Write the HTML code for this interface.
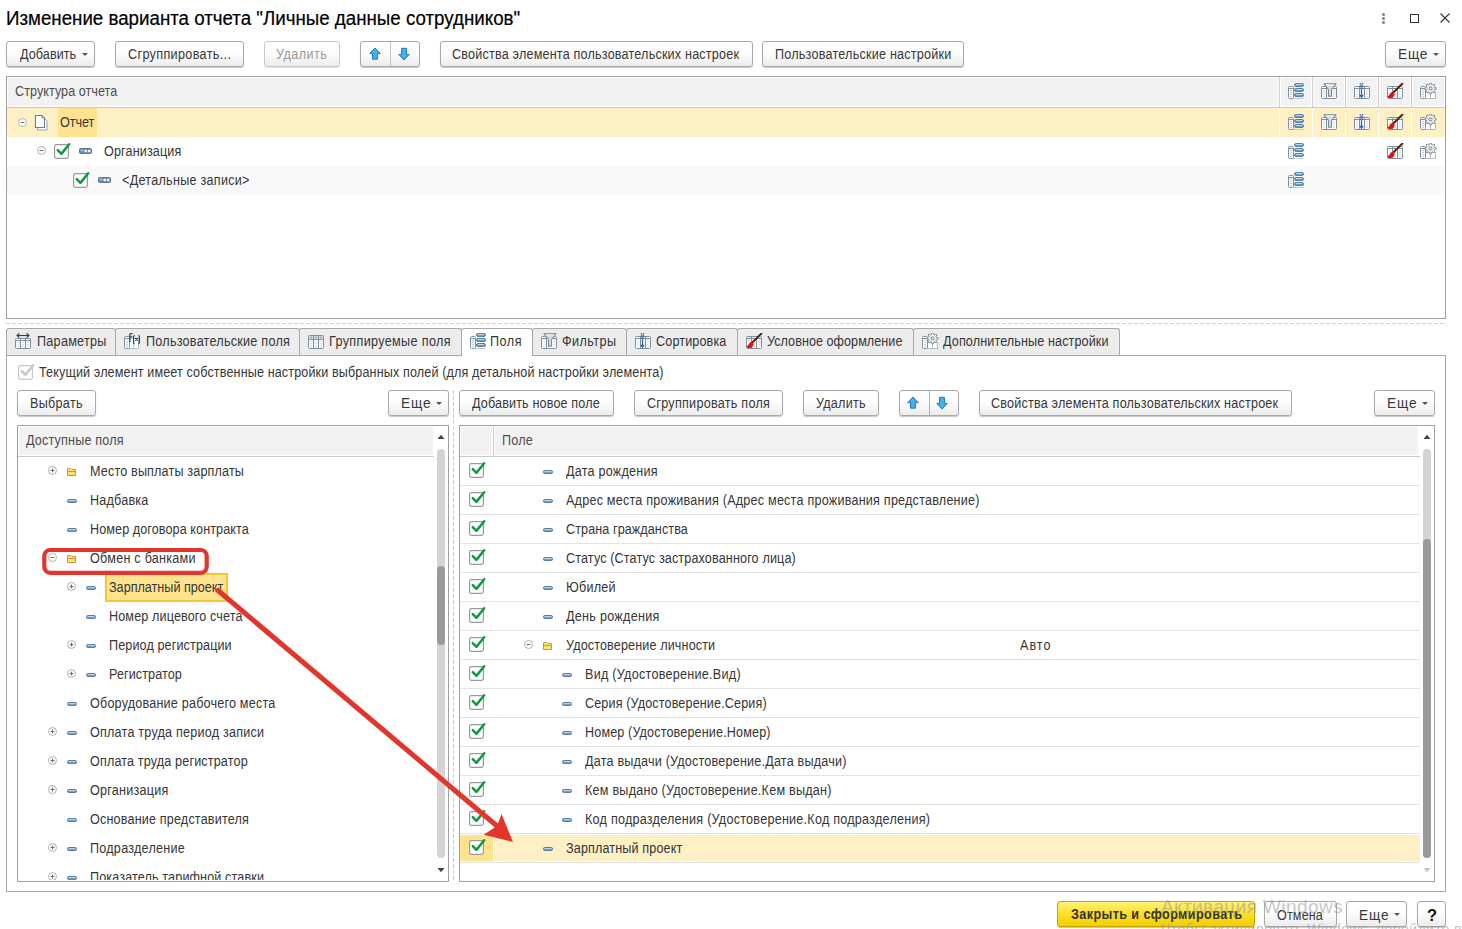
<!DOCTYPE html><html><head><meta charset="utf-8"><style>
*{box-sizing:content-box}
html,body{margin:0;padding:0}
body{width:1462px;height:929px;position:relative;overflow:hidden;background:#fff;font-family:"Liberation Sans",sans-serif;}
.t{position:absolute;white-space:nowrap}
.btn{position:absolute;border:1px solid #a9a9a9;border-radius:3px;background:linear-gradient(#ffffff 0%,#fdfdfd 45%,#ececec 100%)}
.dd{position:absolute;width:0;height:0;border-left:3.5px solid transparent;border-right:3.5px solid transparent;border-top:3.5px solid #555}
</style></head><body>
<div class="t" style="left:6.0px;top:8.59px;font-size:19.5px;line-height:19.5px;color:#000;font-weight:normal;letter-spacing:0px;transform:scaleX(0.96);transform-origin:0 0;-webkit-text-stroke:0.2px #000">Изменение варианта отчета "Личные данные сотрудников"</div>
<div style="position:absolute;left:1382px;top:13.0px;width:3px;height:3px;border-radius:50%;background:#808080"></div>
<div style="position:absolute;left:1382px;top:17.0px;width:3px;height:3px;border-radius:50%;background:#808080"></div>
<div style="position:absolute;left:1382px;top:21.0px;width:3px;height:3px;border-radius:50%;background:#808080"></div>
<div style="position:absolute;left:1410px;top:14px;width:7px;height:7px;border:1.3px solid #333"></div>
<svg style="position:absolute;left:1440px;top:13px;" width="10" height="10" viewBox="0 0 10 10"><path d="M0.5 0.5L9.5 9.5M9.5 0.5L0.5 9.5" stroke="#333" stroke-width="1.1"/></svg>
<div class="btn" style="left:6px;top:41px;width:87px;height:24px;border-color:#a9a9a9;box-shadow:0 1px 1px rgba(0,0,0,0.22)"></div>
<div class="t" style="left:19.7px;top:47.15px;font-size:14px;line-height:14px;color:#383838;font-weight:normal;letter-spacing:0.07380952380952813px;transform:scaleX(0.9);transform-origin:0 0;">Добавить</div>
<div class="dd" style="left:82px;top:53px"></div>
<div class="btn" style="left:115px;top:41px;width:127px;height:24px;border-color:#a9a9a9;box-shadow:0 1px 1px rgba(0,0,0,0.22)"></div>
<div class="t" style="left:127.5px;top:47.15px;font-size:14px;line-height:14px;color:#383838;font-weight:normal;letter-spacing:0.3899999999999939px;transform:scaleX(0.9);transform-origin:0 0;">Сгруппировать...</div>
<div class="btn" style="left:264px;top:41px;width:74px;height:24px;border-color:#c8c8c8;box-shadow:0 1px 0 rgba(0,0,0,0.10)"></div>
<div class="t" style="left:276.1px;top:47.15px;font-size:14px;line-height:14px;color:#999;font-weight:normal;letter-spacing:0.5055555555555858px;transform:scaleX(0.9);transform-origin:0 0;">Удалить</div>
<div class="btn" style="left:360px;top:41px;width:58px;height:24px;border-color:#a9a9a9;box-shadow:0 1px 1px rgba(0,0,0,0.22)"></div>
<div style="position:absolute;left:390px;top:42px;width:1px;height:24px;background:#c4c4c4"></div>
<div class="btn" style="left:440px;top:41px;width:311px;height:24px;border-color:#a9a9a9;box-shadow:0 1px 1px rgba(0,0,0,0.22)"></div>
<div class="t" style="left:452.4px;top:47.15px;font-size:14px;line-height:14px;color:#383838;font-weight:normal;letter-spacing:0.21349206349206348px;transform:scaleX(0.9);transform-origin:0 0;">Свойства элемента пользовательских настроек</div>
<div class="btn" style="left:762px;top:41px;width:200px;height:24px;border-color:#a9a9a9;box-shadow:0 1px 1px rgba(0,0,0,0.22)"></div>
<div class="t" style="left:774.7px;top:47.15px;font-size:14px;line-height:14px;color:#383838;font-weight:normal;letter-spacing:0.2459999999999854px;transform:scaleX(0.9);transform-origin:0 0;">Пользовательские настройки</div>
<div class="btn" style="left:1385px;top:41px;width:59px;height:24px;border-color:#a9a9a9;box-shadow:0 1px 1px rgba(0,0,0,0.22)"></div>
<div class="t" style="left:1398.4px;top:47.15px;font-size:14px;line-height:14px;color:#383838;font-weight:normal;letter-spacing:0.7833333333332879px;transform:scaleX(0.98);transform-origin:0 0;">Еще</div>
<div class="dd" style="left:1433px;top:53px"></div>
<div style="position:absolute;left:6px;top:76px;width:1438px;height:241px;border:1px solid #a0a0a0;background:#fff"></div>
<div style="position:absolute;left:8px;top:78px;width:1270px;height:28px;background:#f2f2f2"></div>
<div style="position:absolute;left:7px;top:107px;width:1438px;height:1px;background:#c9c9c9"></div>
<div class="t" style="left:14.8px;top:83.75px;font-size:14px;line-height:14px;color:#4d4d4d;font-weight:normal;letter-spacing:0.05222222222222023px;transform:scaleX(0.9);transform-origin:0 0;">Структура отчета</div>
<div style="position:absolute;left:7px;top:108px;width:1438px;height:29px;background:#fdf0c5"></div>
<div style="position:absolute;left:58px;top:108px;width:39px;height:29px;background:#fde391"></div>
<div style="position:absolute;left:7px;top:166px;width:1438px;height:29px;background:#f9f9f9"></div>
<div class="t" style="left:59.8px;top:114.85px;font-size:14px;line-height:14px;color:#363636;font-weight:normal;letter-spacing:-0.08333333333332954px;transform:scaleX(0.9);transform-origin:0 0;">Отчет</div>
<div class="t" style="left:103.8px;top:143.85px;font-size:14px;line-height:14px;color:#363636;font-weight:normal;letter-spacing:0.15px;transform:scaleX(0.9);transform-origin:0 0;">Организация</div>
<div class="t" style="left:122.4px;top:172.85px;font-size:14px;line-height:14px;color:#363636;font-weight:normal;letter-spacing:0.29901960784313547px;transform:scaleX(0.9);transform-origin:0 0;">&lt;Детальные записи&gt;</div>
<svg style="position:absolute;left:18px;top:118px;" width="9" height="9" viewBox="0 0 9 9"><circle cx="4.5" cy="4.5" r="4" fill="#fff" stroke="#b0b0b0" stroke-width="1"/><path d="M2.5 4.5H6.5" stroke="#6e6e6e" stroke-width="1"/></svg>
<svg style="position:absolute;left:37px;top:146px;" width="9" height="9" viewBox="0 0 9 9"><circle cx="4.5" cy="4.5" r="4" fill="#fff" stroke="#b0b0b0" stroke-width="1"/><path d="M2.5 4.5H6.5" stroke="#6e6e6e" stroke-width="1"/></svg>
<svg style="position:absolute;left:54px;top:141px;" width="17" height="18" viewBox="0 0 17 18"><rect x="0.6" y="3.6" width="13.8" height="13.8" rx="1.8" fill="#fff" stroke="#9a9a9a" stroke-width="1.2"/><path d="M3.8 9.2L7.4 12.9L15.2 3.2" fill="none" stroke="#0e9a40" stroke-width="2.5" stroke-linecap="round" stroke-linejoin="round"/></svg>
<svg style="position:absolute;left:73px;top:170px;" width="17" height="18" viewBox="0 0 17 18"><rect x="0.6" y="3.6" width="13.8" height="13.8" rx="1.8" fill="#fff" stroke="#9a9a9a" stroke-width="1.2"/><path d="M3.8 9.2L7.4 12.9L15.2 3.2" fill="none" stroke="#0e9a40" stroke-width="2.5" stroke-linecap="round" stroke-linejoin="round"/></svg>
<svg style="position:absolute;left:369px;top:47px;" width="12" height="14" viewBox="0 0 12 14"><path d="M6 1L11.2 6.6H8.4V12.2H3.6V6.6H0.8z" fill="#45b0ea" stroke="#2277b8" stroke-width="1" stroke-linejoin="miter"/></svg>
<svg style="position:absolute;left:397.5px;top:47px;" width="12" height="14" viewBox="0 0 12 14"><path d="M6 13L11.2 7.4H8.4V1.3H3.6V7.4H0.8z" fill="#45b0ea" stroke="#2277b8" stroke-width="1" stroke-linejoin="miter"/></svg>
<div style="position:absolute;left:1279px;top:77px;width:1px;height:30px;background:#cdcdcd"></div>
<div style="position:absolute;left:1281px;top:78px;width:30px;height:28px;background:#f2f2f2"></div>
<div style="position:absolute;left:1279px;top:108px;width:1px;height:29px;background:#ffffff"></div>
<div style="position:absolute;left:1312px;top:77px;width:1px;height:30px;background:#cdcdcd"></div>
<div style="position:absolute;left:1314px;top:78px;width:30px;height:28px;background:#f2f2f2"></div>
<div style="position:absolute;left:1312px;top:108px;width:1px;height:29px;background:#ffffff"></div>
<div style="position:absolute;left:1345px;top:77px;width:1px;height:30px;background:#cdcdcd"></div>
<div style="position:absolute;left:1347px;top:78px;width:30px;height:28px;background:#f2f2f2"></div>
<div style="position:absolute;left:1345px;top:108px;width:1px;height:29px;background:#ffffff"></div>
<div style="position:absolute;left:1378px;top:77px;width:1px;height:30px;background:#cdcdcd"></div>
<div style="position:absolute;left:1380px;top:78px;width:30px;height:28px;background:#f2f2f2"></div>
<div style="position:absolute;left:1378px;top:108px;width:1px;height:29px;background:#ffffff"></div>
<div style="position:absolute;left:1411px;top:77px;width:1px;height:30px;background:#cdcdcd"></div>
<div style="position:absolute;left:1413px;top:78px;width:31px;height:28px;background:#f2f2f2"></div>
<div style="position:absolute;left:1411px;top:108px;width:1px;height:29px;background:#ffffff"></div>
<svg style="position:absolute;left:1288px;top:83px;" width="17" height="16" viewBox="0 0 17 16"><path d="M5.5 15.5H15.5" stroke="#c2cbd3"/><rect x="0.5" y="3.5" width="5" height="12" rx="1" fill="#fff" stroke="#7f8f9d"/><path d="M0.5 5.5H5.5" stroke="#7f8f9d"/><path d="M3 7V15" stroke="#8e9ca8" stroke-dasharray="1 1"/><rect x="6.5" y="0.5" width="9" height="3" rx="1.5" fill="#6f9bc3" stroke="#5683ab" stroke-width="1"/><path d="M7.8 1.5H14.2" stroke="#c0d5e8" stroke-width="1"/><rect x="6.5" y="5.5" width="9" height="3" rx="1.5" fill="#6f9bc3" stroke="#5683ab" stroke-width="1"/><path d="M7.8 6.5H14.2" stroke="#c0d5e8" stroke-width="1"/><rect x="6.5" y="10.5" width="9" height="3" rx="1.5" fill="#6f9bc3" stroke="#5683ab" stroke-width="1"/><path d="M7.8 11.5H14.2" stroke="#c0d5e8" stroke-width="1"/></svg>
<svg style="position:absolute;left:1288px;top:114px;" width="17" height="16" viewBox="0 0 17 16"><path d="M5.5 15.5H15.5" stroke="#c2cbd3"/><rect x="0.5" y="3.5" width="5" height="12" rx="1" fill="#fff" stroke="#7f8f9d"/><path d="M0.5 5.5H5.5" stroke="#7f8f9d"/><path d="M3 7V15" stroke="#8e9ca8" stroke-dasharray="1 1"/><rect x="6.5" y="0.5" width="9" height="3" rx="1.5" fill="#6f9bc3" stroke="#5683ab" stroke-width="1"/><path d="M7.8 1.5H14.2" stroke="#c0d5e8" stroke-width="1"/><rect x="6.5" y="5.5" width="9" height="3" rx="1.5" fill="#6f9bc3" stroke="#5683ab" stroke-width="1"/><path d="M7.8 6.5H14.2" stroke="#c0d5e8" stroke-width="1"/><rect x="6.5" y="10.5" width="9" height="3" rx="1.5" fill="#6f9bc3" stroke="#5683ab" stroke-width="1"/><path d="M7.8 11.5H14.2" stroke="#c0d5e8" stroke-width="1"/></svg>
<svg style="position:absolute;left:1321px;top:83px;" width="17" height="16" viewBox="0 0 17 16"><rect x="0.5" y="3.5" width="15" height="12" rx="1" fill="#fff" stroke="#7f8f9d" stroke-width="1"/><path d="M0.5 5.5H15.5M5.5 4V15" stroke="#7f8f9d" stroke-width="1"/><path d="M3 7V15M8 7V15M13 7V15" stroke="#b3bec8" stroke-width="1" stroke-dasharray="1 1"/><path d="M2.8 0.8H15.2L10.6 6.2V13.2H7.4V6.2z" fill="#d7dde3" stroke="#6c7d8c" stroke-width="1" stroke-linejoin="round"/><path d="M5 1.8H13" stroke="#fff" stroke-width="0.8"/></svg>
<svg style="position:absolute;left:1321px;top:114px;" width="17" height="16" viewBox="0 0 17 16"><rect x="0.5" y="3.5" width="15" height="12" rx="1" fill="#fff" stroke="#7f8f9d" stroke-width="1"/><path d="M0.5 5.5H15.5M5.5 4V15" stroke="#7f8f9d" stroke-width="1"/><path d="M3 7V15M8 7V15M13 7V15" stroke="#b3bec8" stroke-width="1" stroke-dasharray="1 1"/><path d="M2.8 0.8H15.2L10.6 6.2V13.2H7.4V6.2z" fill="#d7dde3" stroke="#6c7d8c" stroke-width="1" stroke-linejoin="round"/><path d="M5 1.8H13" stroke="#fff" stroke-width="0.8"/></svg>
<svg style="position:absolute;left:1354px;top:83px;" width="17" height="16" viewBox="0 0 17 16"><rect x="0.5" y="3.5" width="15" height="12" rx="1" fill="#fff" stroke="#7f8f9d" stroke-width="1"/><path d="M0.5 5.5H15.5M5.5 4V15M10.5 4V15" stroke="#7f8f9d" stroke-width="1"/><path d="M3 7V15M8 7V15M13 7V15" stroke="#b3bec8" stroke-width="1" stroke-dasharray="1 1"/><rect x="6" y="6" width="4" height="9" fill="#fff"/><path d="M7.5 7V12.5" stroke="#2d64a8" stroke-width="1.3"/><path d="M5.2 11.8H9.8L7.5 15.4z" fill="#2d64a8"/><circle cx="6.3" cy="0.8" r="0.75" fill="#2d64a8"/><circle cx="8.7" cy="0.8" r="0.75" fill="#2d64a8"/><circle cx="7.5" cy="1.9" r="0.75" fill="#2d64a8"/><circle cx="6.3" cy="3" r="0.75" fill="#2d64a8"/><circle cx="8.7" cy="3" r="0.75" fill="#2d64a8"/><circle cx="7.5" cy="4.1" r="0.75" fill="#2d64a8"/><circle cx="6.3" cy="5.2" r="0.75" fill="#2d64a8"/><circle cx="8.7" cy="5.2" r="0.75" fill="#2d64a8"/><circle cx="7.5" cy="6.3" r="0.75" fill="#2d64a8"/></svg>
<svg style="position:absolute;left:1354px;top:114px;" width="17" height="16" viewBox="0 0 17 16"><rect x="0.5" y="3.5" width="15" height="12" rx="1" fill="#fff" stroke="#7f8f9d" stroke-width="1"/><path d="M0.5 5.5H15.5M5.5 4V15M10.5 4V15" stroke="#7f8f9d" stroke-width="1"/><path d="M3 7V15M8 7V15M13 7V15" stroke="#b3bec8" stroke-width="1" stroke-dasharray="1 1"/><rect x="6" y="6" width="4" height="9" fill="#fff"/><path d="M7.5 7V12.5" stroke="#2d64a8" stroke-width="1.3"/><path d="M5.2 11.8H9.8L7.5 15.4z" fill="#2d64a8"/><circle cx="6.3" cy="0.8" r="0.75" fill="#2d64a8"/><circle cx="8.7" cy="0.8" r="0.75" fill="#2d64a8"/><circle cx="7.5" cy="1.9" r="0.75" fill="#2d64a8"/><circle cx="6.3" cy="3" r="0.75" fill="#2d64a8"/><circle cx="8.7" cy="3" r="0.75" fill="#2d64a8"/><circle cx="7.5" cy="4.1" r="0.75" fill="#2d64a8"/><circle cx="6.3" cy="5.2" r="0.75" fill="#2d64a8"/><circle cx="8.7" cy="5.2" r="0.75" fill="#2d64a8"/><circle cx="7.5" cy="6.3" r="0.75" fill="#2d64a8"/></svg>
<svg style="position:absolute;left:1387px;top:83px;" width="17" height="16" viewBox="0 0 17 16"><rect x="0.5" y="3.5" width="15" height="12" rx="1" fill="#fff" stroke="#7f8f9d" stroke-width="1"/><path d="M0.5 5.5H15.5M5.5 4V15M10.5 4V15" stroke="#7f8f9d" stroke-width="1"/><path d="M3 7V15M8 7V15M13 7V15" stroke="#b3bec8" stroke-width="1" stroke-dasharray="1 1"/><path d="M15.4 0.6L6.8 9" stroke="#4b2608" stroke-width="2" stroke-linecap="round"/><path d="M7 8.8C4.6 8.6 3.4 9.9 2.8 11.3C2.4 12.3 1.5 12.9 0.2 13.7C1.3 15.5 4.8 15.5 6.2 14C7.4 12.8 8 10.8 7 8.8z" fill="#ee0a0a"/></svg>
<svg style="position:absolute;left:1387px;top:114px;" width="17" height="16" viewBox="0 0 17 16"><rect x="0.5" y="3.5" width="15" height="12" rx="1" fill="#fff" stroke="#7f8f9d" stroke-width="1"/><path d="M0.5 5.5H15.5M5.5 4V15M10.5 4V15" stroke="#7f8f9d" stroke-width="1"/><path d="M3 7V15M8 7V15M13 7V15" stroke="#b3bec8" stroke-width="1" stroke-dasharray="1 1"/><path d="M15.4 0.6L6.8 9" stroke="#4b2608" stroke-width="2" stroke-linecap="round"/><path d="M7 8.8C4.6 8.6 3.4 9.9 2.8 11.3C2.4 12.3 1.5 12.9 0.2 13.7C1.3 15.5 4.8 15.5 6.2 14C7.4 12.8 8 10.8 7 8.8z" fill="#ee0a0a"/></svg>
<svg style="position:absolute;left:1420px;top:83px;" width="17" height="16" viewBox="0 0 17 16"><rect x="5.5" y="9.5" width="10" height="6" fill="#fff" stroke="#b0bbc5"/><path d="M10.5 9.5V15.5" stroke="#b0bbc5"/><rect x="0.5" y="3.5" width="5" height="12" rx="1" fill="#fff" stroke="#7f8f9d"/><path d="M0.5 5.5H5.5" stroke="#7f8f9d"/><path d="M3 7V15" stroke="#8e9ca8" stroke-dasharray="1 1"/><g transform="translate(10.5 5.4)"><path d="M3.98 -0.97 L5.55 -0.73 L5.55 0.73 L3.98 0.97 L3.51 2.13 L4.44 3.41 L3.41 4.44 L2.13 3.51 L0.97 3.98 L0.73 5.55 L-0.73 5.55 L-0.97 3.98 L-2.13 3.51 L-3.41 4.44 L-4.44 3.41 L-3.51 2.13 L-3.98 0.97 L-5.55 0.73 L-5.55 -0.73 L-3.98 -0.97 L-3.51 -2.13 L-4.44 -3.41 L-3.41 -4.44 L-2.13 -3.51 L-0.97 -3.98 L-0.73 -5.55 L0.73 -5.55 L0.97 -3.98 L2.13 -3.51 L3.41 -4.44 L4.44 -3.41 L3.51 -2.13Z" fill="#eef0f2" stroke="#7b858e" stroke-width="0.9" stroke-linejoin="round"/><circle r="1.5" fill="#fff" stroke="#6b747c" stroke-width="1"/></g></svg>
<svg style="position:absolute;left:1420px;top:114px;" width="17" height="16" viewBox="0 0 17 16"><rect x="5.5" y="9.5" width="10" height="6" fill="#fff" stroke="#b0bbc5"/><path d="M10.5 9.5V15.5" stroke="#b0bbc5"/><rect x="0.5" y="3.5" width="5" height="12" rx="1" fill="#fff" stroke="#7f8f9d"/><path d="M0.5 5.5H5.5" stroke="#7f8f9d"/><path d="M3 7V15" stroke="#8e9ca8" stroke-dasharray="1 1"/><g transform="translate(10.5 5.4)"><path d="M3.98 -0.97 L5.55 -0.73 L5.55 0.73 L3.98 0.97 L3.51 2.13 L4.44 3.41 L3.41 4.44 L2.13 3.51 L0.97 3.98 L0.73 5.55 L-0.73 5.55 L-0.97 3.98 L-2.13 3.51 L-3.41 4.44 L-4.44 3.41 L-3.51 2.13 L-3.98 0.97 L-5.55 0.73 L-5.55 -0.73 L-3.98 -0.97 L-3.51 -2.13 L-4.44 -3.41 L-3.41 -4.44 L-2.13 -3.51 L-0.97 -3.98 L-0.73 -5.55 L0.73 -5.55 L0.97 -3.98 L2.13 -3.51 L3.41 -4.44 L4.44 -3.41 L3.51 -2.13Z" fill="#eef0f2" stroke="#7b858e" stroke-width="0.9" stroke-linejoin="round"/><circle r="1.5" fill="#fff" stroke="#6b747c" stroke-width="1"/></g></svg>
<svg style="position:absolute;left:1288px;top:143px;" width="17" height="16" viewBox="0 0 17 16"><path d="M5.5 15.5H15.5" stroke="#c2cbd3"/><rect x="0.5" y="3.5" width="5" height="12" rx="1" fill="#fff" stroke="#7f8f9d"/><path d="M0.5 5.5H5.5" stroke="#7f8f9d"/><path d="M3 7V15" stroke="#8e9ca8" stroke-dasharray="1 1"/><rect x="6.5" y="0.5" width="9" height="3" rx="1.5" fill="#6f9bc3" stroke="#5683ab" stroke-width="1"/><path d="M7.8 1.5H14.2" stroke="#c0d5e8" stroke-width="1"/><rect x="6.5" y="5.5" width="9" height="3" rx="1.5" fill="#6f9bc3" stroke="#5683ab" stroke-width="1"/><path d="M7.8 6.5H14.2" stroke="#c0d5e8" stroke-width="1"/><rect x="6.5" y="10.5" width="9" height="3" rx="1.5" fill="#6f9bc3" stroke="#5683ab" stroke-width="1"/><path d="M7.8 11.5H14.2" stroke="#c0d5e8" stroke-width="1"/></svg>
<svg style="position:absolute;left:1387px;top:143px;" width="17" height="16" viewBox="0 0 17 16"><rect x="0.5" y="3.5" width="15" height="12" rx="1" fill="#fff" stroke="#7f8f9d" stroke-width="1"/><path d="M0.5 5.5H15.5M5.5 4V15M10.5 4V15" stroke="#7f8f9d" stroke-width="1"/><path d="M3 7V15M8 7V15M13 7V15" stroke="#b3bec8" stroke-width="1" stroke-dasharray="1 1"/><path d="M15.4 0.6L6.8 9" stroke="#4b2608" stroke-width="2" stroke-linecap="round"/><path d="M7 8.8C4.6 8.6 3.4 9.9 2.8 11.3C2.4 12.3 1.5 12.9 0.2 13.7C1.3 15.5 4.8 15.5 6.2 14C7.4 12.8 8 10.8 7 8.8z" fill="#ee0a0a"/></svg>
<svg style="position:absolute;left:1420px;top:143px;" width="17" height="16" viewBox="0 0 17 16"><rect x="5.5" y="9.5" width="10" height="6" fill="#fff" stroke="#b0bbc5"/><path d="M10.5 9.5V15.5" stroke="#b0bbc5"/><rect x="0.5" y="3.5" width="5" height="12" rx="1" fill="#fff" stroke="#7f8f9d"/><path d="M0.5 5.5H5.5" stroke="#7f8f9d"/><path d="M3 7V15" stroke="#8e9ca8" stroke-dasharray="1 1"/><g transform="translate(10.5 5.4)"><path d="M3.98 -0.97 L5.55 -0.73 L5.55 0.73 L3.98 0.97 L3.51 2.13 L4.44 3.41 L3.41 4.44 L2.13 3.51 L0.97 3.98 L0.73 5.55 L-0.73 5.55 L-0.97 3.98 L-2.13 3.51 L-3.41 4.44 L-4.44 3.41 L-3.51 2.13 L-3.98 0.97 L-5.55 0.73 L-5.55 -0.73 L-3.98 -0.97 L-3.51 -2.13 L-4.44 -3.41 L-3.41 -4.44 L-2.13 -3.51 L-0.97 -3.98 L-0.73 -5.55 L0.73 -5.55 L0.97 -3.98 L2.13 -3.51 L3.41 -4.44 L4.44 -3.41 L3.51 -2.13Z" fill="#eef0f2" stroke="#7b858e" stroke-width="0.9" stroke-linejoin="round"/><circle r="1.5" fill="#fff" stroke="#6b747c" stroke-width="1"/></g></svg>
<svg style="position:absolute;left:1288px;top:172px;" width="17" height="16" viewBox="0 0 17 16"><path d="M5.5 15.5H15.5" stroke="#c2cbd3"/><rect x="0.5" y="3.5" width="5" height="12" rx="1" fill="#fff" stroke="#7f8f9d"/><path d="M0.5 5.5H5.5" stroke="#7f8f9d"/><path d="M3 7V15" stroke="#8e9ca8" stroke-dasharray="1 1"/><rect x="6.5" y="0.5" width="9" height="3" rx="1.5" fill="#6f9bc3" stroke="#5683ab" stroke-width="1"/><path d="M7.8 1.5H14.2" stroke="#c0d5e8" stroke-width="1"/><rect x="6.5" y="5.5" width="9" height="3" rx="1.5" fill="#6f9bc3" stroke="#5683ab" stroke-width="1"/><path d="M7.8 6.5H14.2" stroke="#c0d5e8" stroke-width="1"/><rect x="6.5" y="10.5" width="9" height="3" rx="1.5" fill="#6f9bc3" stroke="#5683ab" stroke-width="1"/><path d="M7.8 11.5H14.2" stroke="#c0d5e8" stroke-width="1"/></svg>
<svg style="position:absolute;left:34px;top:114px;" width="15" height="17" viewBox="0 0 15 17"><path d="M3.5 4.5h7l2.5 2.5v9h-9.5z" fill="#fff" stroke="#9ea5ab" stroke-width="1"/><path d="M1.5 1.5h6.5l2.5 2.5v9.5h-9z" fill="#fff" stroke="#6a7f93" stroke-width="1.1"/><path d="M8 1.5v2.5h2.5" fill="#dfe5ea" stroke="#6a7f93" stroke-width="0.9"/></svg>
<svg style="position:absolute;left:79px;top:148px;" width="13" height="6" viewBox="0 0 13 6"><rect x="0.5" y="0.5" width="12" height="5" rx="1" fill="#6c89a6" stroke="#5a7896" stroke-width="1"/><rect x="1.6" y="1.6" width="3" height="1.6" fill="#b9c9d8"/><rect x="5.6" y="1.8" width="2.4" height="2.4" fill="#f4f7fa"/><rect x="9" y="1.8" width="2.4" height="2.4" fill="#f4f7fa"/></svg>
<svg style="position:absolute;left:98px;top:177px;" width="13" height="6" viewBox="0 0 13 6"><rect x="0.5" y="0.5" width="12" height="5" rx="1" fill="#6c89a6" stroke="#5a7896" stroke-width="1"/><rect x="1.6" y="1.6" width="3" height="1.6" fill="#b9c9d8"/><rect x="5.6" y="1.8" width="2.4" height="2.4" fill="#f4f7fa"/><rect x="9" y="1.8" width="2.4" height="2.4" fill="#f4f7fa"/></svg>
<div style="position:absolute;left:6px;top:323px;width:1440px;height:1px;background:repeating-linear-gradient(90deg,#d2d2d2 0 4px,transparent 4px 6px)"></div>
<div style="position:absolute;left:6px;top:355px;width:1438px;height:535px;border:1px solid #a8a8a8;background:#fff"></div>
<div style="position:absolute;left:6px;top:328px;width:108px;height:26px;border:1px solid #a8a8a8;border-bottom:none;border-radius:3px 3px 0 0;background:#ececec"></div>
<svg style="position:absolute;left:15px;top:333px;" width="17" height="16" viewBox="0 0 17 16"><rect x="0.5" y="5.5" width="15" height="10" rx="1" fill="#fff" stroke="#7f8f9d"/><path d="M0.5 7.5H15.5M5.5 6V15M10.5 6V15" stroke="#7f8f9d"/><path d="M3 9V15M8 9V15M13 9V15" stroke="#b3bec8" stroke-dasharray="1 1"/><path d="M2.2 2.5H13.8" stroke="#2e3f50" stroke-width="1.1"/><path d="M4.4 0.3L2 2.5L4.4 4.7M11.6 0.3L14 2.5L11.6 4.7" fill="none" stroke="#2e3f50" stroke-width="1.1"/></svg>
<div class="t" style="left:36.8px;top:334.25px;font-size:14px;line-height:14px;color:#363636;font-weight:normal;letter-spacing:0.29999999999999616px;transform:scaleX(0.9);transform-origin:0 0;">Параметры</div>
<div style="position:absolute;left:115px;top:328px;width:183px;height:26px;border:1px solid #a8a8a8;border-bottom:none;border-radius:3px 3px 0 0;background:#ececec"></div>
<svg style="position:absolute;left:124px;top:333px;" width="17" height="16" viewBox="0 0 17 16"><rect x="4.5" y="5.5" width="10" height="10" fill="#fff" stroke="#b8c2ca"/><path d="M9.5 6V15.5" stroke="#b8c2ca"/><rect x="0.5" y="3.5" width="5" height="12" rx="1" fill="#fff" stroke="#7f8f9d"/><path d="M0.5 5.5H5.5" stroke="#7f8f9d"/><path d="M3 7V15" stroke="#8e9ca8" stroke-dasharray="1 1"/><path d="M5.8 9.2V1.6Q5.8 0.7 6.8 0.7H8.6M5.8 3.9H8.4" fill="none" stroke="#1f4a6e" stroke-width="1.3"/><path d="M10.6 2.4Q9.6 2.6 9.6 4V9.4Q9.6 10.6 10.6 10.8M14.4 2.4Q15.4 2.6 15.4 4V9.4Q15.4 10.6 14.4 10.8" fill="none" stroke="#1f4a6e" stroke-width="1.2"/><path d="M11.2 5L13.8 7.6M13.8 5L11.2 7.6" stroke="#1f4a6e" stroke-width="1.1"/></svg>
<div class="t" style="left:145.5px;top:334.25px;font-size:14px;line-height:14px;color:#363636;font-weight:normal;letter-spacing:0.2766666666666576px;transform:scaleX(0.9);transform-origin:0 0;">Пользовательские поля</div>
<div style="position:absolute;left:299px;top:328px;width:161px;height:26px;border:1px solid #a8a8a8;border-bottom:none;border-radius:3px 3px 0 0;background:#ececec"></div>
<svg style="position:absolute;left:308px;top:333px;" width="17" height="16" viewBox="0 0 17 16"><rect x="0.5" y="2.5" width="15" height="13" rx="1" fill="#fff" stroke="#7f8f9d"/><path d="M0.5 6.5H15.5M5.5 3V15M10.5 3V15" stroke="#7f8f9d"/><path d="M1.5 3.5H4.5V5.5H1.5zM6.5 3.5H9.5V5.5H6.5zM11.5 3.5H14.5V5.5H11.5z" fill="#93a5b5"/><path d="M3 8V15M8 8V15M13 8V15" stroke="#b3bec8" stroke-dasharray="1 1"/></svg>
<div class="t" style="left:329.3px;top:334.25px;font-size:14px;line-height:14px;color:#363636;font-weight:normal;letter-spacing:0.3833333333333294px;transform:scaleX(0.9);transform-origin:0 0;">Группируемые поля</div>
<div style="position:absolute;left:461px;top:328px;width:70px;height:27px;border:1px solid #a8a8a8;border-bottom:none;border-radius:3px 3px 0 0;background:#fff"></div>
<svg style="position:absolute;left:470px;top:333px;" width="17" height="16" viewBox="0 0 17 16"><path d="M5.5 15.5H15.5" stroke="#c2cbd3"/><rect x="0.5" y="3.5" width="5" height="12" rx="1" fill="#fff" stroke="#7f8f9d"/><path d="M0.5 5.5H5.5" stroke="#7f8f9d"/><path d="M3 7V15" stroke="#8e9ca8" stroke-dasharray="1 1"/><rect x="6.5" y="0.5" width="9" height="3" rx="1.5" fill="#6f9bc3" stroke="#5683ab" stroke-width="1"/><path d="M7.8 1.5H14.2" stroke="#c0d5e8" stroke-width="1"/><rect x="6.5" y="5.5" width="9" height="3" rx="1.5" fill="#6f9bc3" stroke="#5683ab" stroke-width="1"/><path d="M7.8 6.5H14.2" stroke="#c0d5e8" stroke-width="1"/><rect x="6.5" y="10.5" width="9" height="3" rx="1.5" fill="#6f9bc3" stroke="#5683ab" stroke-width="1"/><path d="M7.8 11.5H14.2" stroke="#c0d5e8" stroke-width="1"/></svg>
<div class="t" style="left:490.3px;top:334.25px;font-size:14px;line-height:14px;color:#363636;font-weight:normal;letter-spacing:0.5944444444443431px;transform:scaleX(0.9);transform-origin:0 0;">Поля</div>
<div style="position:absolute;left:532px;top:328px;width:93px;height:26px;border:1px solid #a8a8a8;border-bottom:none;border-radius:3px 3px 0 0;background:#ececec"></div>
<svg style="position:absolute;left:541px;top:333px;" width="17" height="16" viewBox="0 0 17 16"><rect x="0.5" y="3.5" width="15" height="12" rx="1" fill="#fff" stroke="#7f8f9d" stroke-width="1"/><path d="M0.5 5.5H15.5M5.5 4V15" stroke="#7f8f9d" stroke-width="1"/><path d="M3 7V15M8 7V15M13 7V15" stroke="#b3bec8" stroke-width="1" stroke-dasharray="1 1"/><path d="M2.8 0.8H15.2L10.6 6.2V13.2H7.4V6.2z" fill="#d7dde3" stroke="#6c7d8c" stroke-width="1" stroke-linejoin="round"/><path d="M5 1.8H13" stroke="#fff" stroke-width="0.8"/></svg>
<div class="t" style="left:562.4px;top:334.25px;font-size:14px;line-height:14px;color:#363636;font-weight:normal;letter-spacing:0.4833333333333333px;transform:scaleX(0.9);transform-origin:0 0;">Фильтры</div>
<div style="position:absolute;left:626px;top:328px;width:110px;height:26px;border:1px solid #a8a8a8;border-bottom:none;border-radius:3px 3px 0 0;background:#ececec"></div>
<svg style="position:absolute;left:635px;top:333px;" width="17" height="16" viewBox="0 0 17 16"><rect x="0.5" y="3.5" width="15" height="12" rx="1" fill="#fff" stroke="#7f8f9d" stroke-width="1"/><path d="M0.5 5.5H15.5M5.5 4V15M10.5 4V15" stroke="#7f8f9d" stroke-width="1"/><path d="M3 7V15M8 7V15M13 7V15" stroke="#b3bec8" stroke-width="1" stroke-dasharray="1 1"/><rect x="6" y="6" width="4" height="9" fill="#fff"/><path d="M7.5 7V12.5" stroke="#2d64a8" stroke-width="1.3"/><path d="M5.2 11.8H9.8L7.5 15.4z" fill="#2d64a8"/><circle cx="6.3" cy="0.8" r="0.75" fill="#2d64a8"/><circle cx="8.7" cy="0.8" r="0.75" fill="#2d64a8"/><circle cx="7.5" cy="1.9" r="0.75" fill="#2d64a8"/><circle cx="6.3" cy="3" r="0.75" fill="#2d64a8"/><circle cx="8.7" cy="3" r="0.75" fill="#2d64a8"/><circle cx="7.5" cy="4.1" r="0.75" fill="#2d64a8"/><circle cx="6.3" cy="5.2" r="0.75" fill="#2d64a8"/><circle cx="8.7" cy="5.2" r="0.75" fill="#2d64a8"/><circle cx="7.5" cy="6.3" r="0.75" fill="#2d64a8"/></svg>
<div class="t" style="left:656.4px;top:334.25px;font-size:14px;line-height:14px;color:#363636;font-weight:normal;letter-spacing:0.15px;transform:scaleX(0.9);transform-origin:0 0;">Сортировка</div>
<div style="position:absolute;left:737px;top:328px;width:175px;height:26px;border:1px solid #a8a8a8;border-bottom:none;border-radius:3px 3px 0 0;background:#ececec"></div>
<svg style="position:absolute;left:746px;top:333px;" width="17" height="16" viewBox="0 0 17 16"><rect x="0.5" y="3.5" width="15" height="12" rx="1" fill="#fff" stroke="#7f8f9d" stroke-width="1"/><path d="M0.5 5.5H15.5M5.5 4V15M10.5 4V15" stroke="#7f8f9d" stroke-width="1"/><path d="M3 7V15M8 7V15M13 7V15" stroke="#b3bec8" stroke-width="1" stroke-dasharray="1 1"/><path d="M15.4 0.6L6.8 9" stroke="#4b2608" stroke-width="2" stroke-linecap="round"/><path d="M7 8.8C4.6 8.6 3.4 9.9 2.8 11.3C2.4 12.3 1.5 12.9 0.2 13.7C1.3 15.5 4.8 15.5 6.2 14C7.4 12.8 8 10.8 7 8.8z" fill="#ee0a0a"/></svg>
<div class="t" style="left:767.3px;top:334.25px;font-size:14px;line-height:14px;color:#363636;font-weight:normal;letter-spacing:0.053703703703690195px;transform:scaleX(0.9);transform-origin:0 0;">Условное оформление</div>
<div style="position:absolute;left:913px;top:328px;width:205px;height:26px;border:1px solid #a8a8a8;border-bottom:none;border-radius:3px 3px 0 0;background:#ececec"></div>
<svg style="position:absolute;left:922px;top:333px;" width="17" height="16" viewBox="0 0 17 16"><rect x="5.5" y="9.5" width="10" height="6" fill="#fff" stroke="#b0bbc5"/><path d="M10.5 9.5V15.5" stroke="#b0bbc5"/><rect x="0.5" y="3.5" width="5" height="12" rx="1" fill="#fff" stroke="#7f8f9d"/><path d="M0.5 5.5H5.5" stroke="#7f8f9d"/><path d="M3 7V15" stroke="#8e9ca8" stroke-dasharray="1 1"/><g transform="translate(10.5 5.4)"><path d="M3.98 -0.97 L5.55 -0.73 L5.55 0.73 L3.98 0.97 L3.51 2.13 L4.44 3.41 L3.41 4.44 L2.13 3.51 L0.97 3.98 L0.73 5.55 L-0.73 5.55 L-0.97 3.98 L-2.13 3.51 L-3.41 4.44 L-4.44 3.41 L-3.51 2.13 L-3.98 0.97 L-5.55 0.73 L-5.55 -0.73 L-3.98 -0.97 L-3.51 -2.13 L-4.44 -3.41 L-3.41 -4.44 L-2.13 -3.51 L-0.97 -3.98 L-0.73 -5.55 L0.73 -5.55 L0.97 -3.98 L2.13 -3.51 L3.41 -4.44 L4.44 -3.41 L3.51 -2.13Z" fill="#eef0f2" stroke="#7b858e" stroke-width="0.9" stroke-linejoin="round"/><circle r="1.5" fill="#fff" stroke="#6b747c" stroke-width="1"/></g></svg>
<div class="t" style="left:943.4px;top:334.25px;font-size:14px;line-height:14px;color:#363636;font-weight:normal;letter-spacing:0.12681159420289329px;transform:scaleX(0.9);transform-origin:0 0;">Дополнительные настройки</div>
<svg style="position:absolute;left:18px;top:362px;" width="17" height="18" viewBox="0 0 17 18"><rect x="0.6" y="3.6" width="13.8" height="13.8" rx="1.8" fill="#fff" stroke="#c8c8c8" stroke-width="1.2"/><path d="M3.8 9.2L7.4 12.9L15.2 3.2" fill="none" stroke="#c8c8c8" stroke-width="2.5" stroke-linecap="round" stroke-linejoin="round"/></svg>
<div class="t" style="left:38.5px;top:365.05px;font-size:14px;line-height:14px;color:#363636;font-weight:normal;letter-spacing:0.13566308243727598px;transform:scaleX(0.9);transform-origin:0 0;">Текущий элемент имеет собственные настройки выбранных полей (для детальной настройки элемента)</div>
<div class="btn" style="left:17px;top:390px;width:77px;height:24px;border-color:#a9a9a9;box-shadow:0 1px 1px rgba(0,0,0,0.22)"></div>
<div class="t" style="left:29.9px;top:396.45px;font-size:14px;line-height:14px;color:#383838;font-weight:normal;letter-spacing:0.3277777777777803px;transform:scaleX(0.9);transform-origin:0 0;">Выбрать</div>
<div class="btn" style="left:388px;top:390px;width:59px;height:24px;border-color:#a9a9a9;box-shadow:0 1px 1px rgba(0,0,0,0.22)"></div>
<div class="t" style="left:401.4px;top:396.45px;font-size:14px;line-height:14px;color:#383838;font-weight:normal;letter-spacing:0.8499999999999887px;transform:scaleX(0.98);transform-origin:0 0;">Еще</div>
<div class="dd" style="left:436px;top:402px"></div>
<div style="position:absolute;left:453px;top:390px;width:1px;height:490px;background:repeating-linear-gradient(180deg,#cdcdcd 0 4px,transparent 4px 6px)"></div>
<div style="position:absolute;left:17px;top:425px;width:430px;height:455px;border:1px solid #a0a0a0;background:#fff"></div>
<div style="position:absolute;left:19px;top:427px;width:414px;height:28px;background:#f2f2f2"></div>
<div style="position:absolute;left:18px;top:456px;width:416px;height:1px;background:#c9c9c9"></div>
<div class="t" style="left:25.5px;top:432.75px;font-size:14px;line-height:14px;color:#4d4d4d;font-weight:normal;letter-spacing:0.19102564102563868px;transform:scaleX(0.9);transform-origin:0 0;">Доступные поля</div>
<svg style="position:absolute;left:437px;top:434px;" width="8" height="6" viewBox="0 0 8 6"><path d="M0.5 5L4 0.8L7.5 5z" fill="#444"/></svg>
<div style="position:absolute;left:437px;top:449px;width:8px;height:409px;background:#d4d4d4;border-radius:4px"></div>
<div style="position:absolute;left:437px;top:566px;width:8px;height:79px;background:#9a9a9a;border-radius:4px"></div>
<svg style="position:absolute;left:437px;top:867px;" width="8" height="6" viewBox="0 0 8 6"><path d="M0.5 1L4 5.2L7.5 1z" fill="#444"/></svg>
<div style="position:absolute;left:18px;top:457px;width:416px;height:423px;overflow:hidden">
<svg style="position:absolute;left:30px;top:9px;" width="9" height="9" viewBox="0 0 9 9"><circle cx="4.5" cy="4.5" r="4" fill="#fff" stroke="#b0b0b0" stroke-width="1"/><path d="M2.5 4.5H6.5M4.5 2.5V6.5" stroke="#6e6e6e" stroke-width="1"/></svg>
<svg style="position:absolute;left:49px;top:11px;" width="9" height="8" viewBox="0 0 9 8"><path d="M0.5 7.5V0.8Q0.5 0.5 0.8 0.5H3.8L4.8 1.5H8.2Q8.5 1.5 8.5 1.8V7.5z" fill="#fde46a" stroke="#cf973c" stroke-width="1"/><path d="M1 3.5H8" stroke="#cf973c" stroke-width="1"/></svg>
<div class="t" style="left:71.5px;top:6.95px;font-size:14px;line-height:14px;color:#363636;font-weight:normal;letter-spacing:0.17539682539682397px;transform:scaleX(0.9);transform-origin:0 0;">Место выплаты зарплаты</div>
<svg style="position:absolute;left:49px;top:42px;" width="10" height="4" viewBox="0 0 10 4"><rect x="0.5" y="0.5" width="9" height="3" rx="1.3" fill="#79a0c4" stroke="#5780a5" stroke-width="1"/><path d="M1.5 1.5H8.5" stroke="#bcd1e5" stroke-width="1"/></svg>
<div class="t" style="left:71.5px;top:35.95px;font-size:14px;line-height:14px;color:#363636;font-weight:normal;letter-spacing:0.22619047619047183px;transform:scaleX(0.9);transform-origin:0 0;">Надбавка</div>
<svg style="position:absolute;left:49px;top:71px;" width="10" height="4" viewBox="0 0 10 4"><rect x="0.5" y="0.5" width="9" height="3" rx="1.3" fill="#79a0c4" stroke="#5780a5" stroke-width="1"/><path d="M1.5 1.5H8.5" stroke="#bcd1e5" stroke-width="1"/></svg>
<div class="t" style="left:71.5px;top:64.95px;font-size:14px;line-height:14px;color:#363636;font-weight:normal;letter-spacing:0.09782608695652305px;transform:scaleX(0.9);transform-origin:0 0;">Номер договора контракта</div>
<svg style="position:absolute;left:30px;top:96px;" width="9" height="9" viewBox="0 0 9 9"><circle cx="4.5" cy="4.5" r="4" fill="#fff" stroke="#b0b0b0" stroke-width="1"/><path d="M2.5 4.5H6.5" stroke="#6e6e6e" stroke-width="1"/></svg>
<svg style="position:absolute;left:49px;top:98px;" width="9" height="8" viewBox="0 0 9 8"><path d="M0.5 7.5V0.8Q0.5 0.5 0.8 0.5H3.8L4.8 1.5H8.2Q8.5 1.5 8.5 1.8V7.5z" fill="#fde46a" stroke="#cf973c" stroke-width="1"/><path d="M1 3.5H8" stroke="#cf973c" stroke-width="1"/></svg>
<div class="t" style="left:71.5px;top:93.95px;font-size:14px;line-height:14px;color:#363636;font-weight:normal;letter-spacing:0.2738095238095195px;transform:scaleX(0.9);transform-origin:0 0;">Обмен с банками</div>
<div style="position:absolute;left:87px;top:116px;width:119px;height:25px;border:2px solid #f6c630;background:#fde38e"></div>
<svg style="position:absolute;left:49px;top:125px;" width="9" height="9" viewBox="0 0 9 9"><circle cx="4.5" cy="4.5" r="4" fill="#fff" stroke="#b0b0b0" stroke-width="1"/><path d="M2.5 4.5H6.5M4.5 2.5V6.5" stroke="#6e6e6e" stroke-width="1"/></svg>
<svg style="position:absolute;left:68px;top:129px;" width="10" height="4" viewBox="0 0 10 4"><rect x="0.5" y="0.5" width="9" height="3" rx="1.3" fill="#79a0c4" stroke="#5780a5" stroke-width="1"/><path d="M1.5 1.5H8.5" stroke="#bcd1e5" stroke-width="1"/></svg>
<div class="t" style="left:90.5px;top:122.95px;font-size:14px;line-height:14px;color:#363636;font-weight:normal;letter-spacing:0.008333333333329557px;transform:scaleX(0.9);transform-origin:0 0;">Зарплатный проект</div>
<svg style="position:absolute;left:68px;top:158px;" width="10" height="4" viewBox="0 0 10 4"><rect x="0.5" y="0.5" width="9" height="3" rx="1.3" fill="#79a0c4" stroke="#5780a5" stroke-width="1"/><path d="M1.5 1.5H8.5" stroke="#bcd1e5" stroke-width="1"/></svg>
<div class="t" style="left:90.5px;top:151.95px;font-size:14px;line-height:14px;color:#363636;font-weight:normal;letter-spacing:0.14298245614034927px;transform:scaleX(0.9);transform-origin:0 0;">Номер лицевого счета</div>
<svg style="position:absolute;left:49px;top:183px;" width="9" height="9" viewBox="0 0 9 9"><circle cx="4.5" cy="4.5" r="4" fill="#fff" stroke="#b0b0b0" stroke-width="1"/><path d="M2.5 4.5H6.5M4.5 2.5V6.5" stroke="#6e6e6e" stroke-width="1"/></svg>
<svg style="position:absolute;left:68px;top:187px;" width="10" height="4" viewBox="0 0 10 4"><rect x="0.5" y="0.5" width="9" height="3" rx="1.3" fill="#79a0c4" stroke="#5780a5" stroke-width="1"/><path d="M1.5 1.5H8.5" stroke="#bcd1e5" stroke-width="1"/></svg>
<div class="t" style="left:90.5px;top:180.95px;font-size:14px;line-height:14px;color:#363636;font-weight:normal;letter-spacing:0.1264705882352977px;transform:scaleX(0.9);transform-origin:0 0;">Период регистрации</div>
<svg style="position:absolute;left:49px;top:212px;" width="9" height="9" viewBox="0 0 9 9"><circle cx="4.5" cy="4.5" r="4" fill="#fff" stroke="#b0b0b0" stroke-width="1"/><path d="M2.5 4.5H6.5M4.5 2.5V6.5" stroke="#6e6e6e" stroke-width="1"/></svg>
<svg style="position:absolute;left:68px;top:216px;" width="10" height="4" viewBox="0 0 10 4"><rect x="0.5" y="0.5" width="9" height="3" rx="1.3" fill="#79a0c4" stroke="#5780a5" stroke-width="1"/><path d="M1.5 1.5H8.5" stroke="#bcd1e5" stroke-width="1"/></svg>
<div class="t" style="left:90.5px;top:209.95px;font-size:14px;line-height:14px;color:#363636;font-weight:normal;letter-spacing:0.0966666666666697px;transform:scaleX(0.9);transform-origin:0 0;">Регистратор</div>
<svg style="position:absolute;left:49px;top:245px;" width="10" height="4" viewBox="0 0 10 4"><rect x="0.5" y="0.5" width="9" height="3" rx="1.3" fill="#79a0c4" stroke="#5780a5" stroke-width="1"/><path d="M1.5 1.5H8.5" stroke="#bcd1e5" stroke-width="1"/></svg>
<div class="t" style="left:71.5px;top:238.95px;font-size:14px;line-height:14px;color:#363636;font-weight:normal;letter-spacing:0.21666666666666431px;transform:scaleX(0.9);transform-origin:0 0;">Оборудование рабочего места</div>
<svg style="position:absolute;left:30px;top:270px;" width="9" height="9" viewBox="0 0 9 9"><circle cx="4.5" cy="4.5" r="4" fill="#fff" stroke="#b0b0b0" stroke-width="1"/><path d="M2.5 4.5H6.5M4.5 2.5V6.5" stroke="#6e6e6e" stroke-width="1"/></svg>
<svg style="position:absolute;left:49px;top:274px;" width="10" height="4" viewBox="0 0 10 4"><rect x="0.5" y="0.5" width="9" height="3" rx="1.3" fill="#79a0c4" stroke="#5780a5" stroke-width="1"/><path d="M1.5 1.5H8.5" stroke="#bcd1e5" stroke-width="1"/></svg>
<div class="t" style="left:71.5px;top:267.95px;font-size:14px;line-height:14px;color:#363636;font-weight:normal;letter-spacing:0.23533333333332845px;transform:scaleX(0.9);transform-origin:0 0;">Оплата труда период записи</div>
<svg style="position:absolute;left:30px;top:299px;" width="9" height="9" viewBox="0 0 9 9"><circle cx="4.5" cy="4.5" r="4" fill="#fff" stroke="#b0b0b0" stroke-width="1"/><path d="M2.5 4.5H6.5M4.5 2.5V6.5" stroke="#6e6e6e" stroke-width="1"/></svg>
<svg style="position:absolute;left:49px;top:303px;" width="10" height="4" viewBox="0 0 10 4"><rect x="0.5" y="0.5" width="9" height="3" rx="1.3" fill="#79a0c4" stroke="#5780a5" stroke-width="1"/><path d="M1.5 1.5H8.5" stroke="#bcd1e5" stroke-width="1"/></svg>
<div class="t" style="left:71.5px;top:296.95px;font-size:14px;line-height:14px;color:#363636;font-weight:normal;letter-spacing:0.16159420289855336px;transform:scaleX(0.9);transform-origin:0 0;">Оплата труда регистратор</div>
<svg style="position:absolute;left:30px;top:328px;" width="9" height="9" viewBox="0 0 9 9"><circle cx="4.5" cy="4.5" r="4" fill="#fff" stroke="#b0b0b0" stroke-width="1"/><path d="M2.5 4.5H6.5M4.5 2.5V6.5" stroke="#6e6e6e" stroke-width="1"/></svg>
<svg style="position:absolute;left:49px;top:332px;" width="10" height="4" viewBox="0 0 10 4"><rect x="0.5" y="0.5" width="9" height="3" rx="1.3" fill="#79a0c4" stroke="#5780a5" stroke-width="1"/><path d="M1.5 1.5H8.5" stroke="#bcd1e5" stroke-width="1"/></svg>
<div class="t" style="left:71.5px;top:325.95px;font-size:14px;line-height:14px;color:#363636;font-weight:normal;letter-spacing:0.269999999999997px;transform:scaleX(0.9);transform-origin:0 0;">Организация</div>
<svg style="position:absolute;left:49px;top:361px;" width="10" height="4" viewBox="0 0 10 4"><rect x="0.5" y="0.5" width="9" height="3" rx="1.3" fill="#79a0c4" stroke="#5780a5" stroke-width="1"/><path d="M1.5 1.5H8.5" stroke="#bcd1e5" stroke-width="1"/></svg>
<div class="t" style="left:71.5px;top:354.95px;font-size:14px;line-height:14px;color:#363636;font-weight:normal;letter-spacing:0.18636363636363773px;transform:scaleX(0.9);transform-origin:0 0;">Основание представителя</div>
<svg style="position:absolute;left:30px;top:386px;" width="9" height="9" viewBox="0 0 9 9"><circle cx="4.5" cy="4.5" r="4" fill="#fff" stroke="#b0b0b0" stroke-width="1"/><path d="M2.5 4.5H6.5M4.5 2.5V6.5" stroke="#6e6e6e" stroke-width="1"/></svg>
<svg style="position:absolute;left:49px;top:390px;" width="10" height="4" viewBox="0 0 10 4"><rect x="0.5" y="0.5" width="9" height="3" rx="1.3" fill="#79a0c4" stroke="#5780a5" stroke-width="1"/><path d="M1.5 1.5H8.5" stroke="#bcd1e5" stroke-width="1"/></svg>
<div class="t" style="left:71.5px;top:383.95px;font-size:14px;line-height:14px;color:#363636;font-weight:normal;letter-spacing:0.2722222222222247px;transform:scaleX(0.9);transform-origin:0 0;">Подразделение</div>
<svg style="position:absolute;left:30px;top:415px;" width="9" height="9" viewBox="0 0 9 9"><circle cx="4.5" cy="4.5" r="4" fill="#fff" stroke="#b0b0b0" stroke-width="1"/><path d="M2.5 4.5H6.5M4.5 2.5V6.5" stroke="#6e6e6e" stroke-width="1"/></svg>
<svg style="position:absolute;left:49px;top:419px;" width="10" height="4" viewBox="0 0 10 4"><rect x="0.5" y="0.5" width="9" height="3" rx="1.3" fill="#79a0c4" stroke="#5780a5" stroke-width="1"/><path d="M1.5 1.5H8.5" stroke="#bcd1e5" stroke-width="1"/></svg>
<div class="t" style="left:71.5px;top:412.95px;font-size:14px;line-height:14px;color:#363636;font-weight:normal;letter-spacing:0.15px;transform:scaleX(0.9);transform-origin:0 0;">Показатель тарифной ставки</div>
</div>
<div class="btn" style="left:459px;top:390px;width:153px;height:24px;border-color:#a9a9a9;box-shadow:0 1px 1px rgba(0,0,0,0.22)"></div>
<div class="t" style="left:472.4px;top:396.45px;font-size:14px;line-height:14px;color:#383838;font-weight:normal;letter-spacing:0.15740740740741752px;transform:scaleX(0.9);transform-origin:0 0;">Добавить новое поле</div>
<div class="btn" style="left:634px;top:390px;width:147px;height:24px;border-color:#a9a9a9;box-shadow:0 1px 1px rgba(0,0,0,0.22)"></div>
<div class="t" style="left:646.9px;top:396.45px;font-size:14px;line-height:14px;color:#383838;font-weight:normal;letter-spacing:0.2911764705882496px;transform:scaleX(0.9);transform-origin:0 0;">Сгруппировать поля</div>
<div class="btn" style="left:803px;top:390px;width:74px;height:24px;border-color:#a9a9a9;box-shadow:0 1px 1px rgba(0,0,0,0.22)"></div>
<div class="t" style="left:815.5px;top:396.45px;font-size:14px;line-height:14px;color:#383838;font-weight:normal;letter-spacing:0.26111111111111107px;transform:scaleX(0.9);transform-origin:0 0;">Удалить</div>
<div class="btn" style="left:899px;top:390px;width:58px;height:24px;border-color:#a9a9a9;box-shadow:0 1px 1px rgba(0,0,0,0.22)"></div>
<div style="position:absolute;left:929px;top:391px;width:1px;height:24px;background:#b0b0b0"></div>
<svg style="position:absolute;left:907px;top:396px;" width="12" height="14" viewBox="0 0 12 14"><path d="M6 1L11.2 6.6H8.4V12.2H3.6V6.6H0.8z" fill="#45b0ea" stroke="#2277b8" stroke-width="1" stroke-linejoin="miter"/></svg>
<svg style="position:absolute;left:936px;top:396px;" width="12" height="14" viewBox="0 0 12 14"><path d="M6 13L11.2 7.4H8.4V1.3H3.6V7.4H0.8z" fill="#45b0ea" stroke="#2277b8" stroke-width="1" stroke-linejoin="miter"/></svg>
<div class="btn" style="left:979px;top:390px;width:311px;height:24px;border-color:#a9a9a9;box-shadow:0 1px 1px rgba(0,0,0,0.22)"></div>
<div class="t" style="left:991.4px;top:396.45px;font-size:14px;line-height:14px;color:#383838;font-weight:normal;letter-spacing:0.21666666666666376px;transform:scaleX(0.9);transform-origin:0 0;">Свойства элемента пользовательских настроек</div>
<div class="btn" style="left:1374px;top:390px;width:59px;height:24px;border-color:#a9a9a9;box-shadow:0 1px 1px rgba(0,0,0,0.22)"></div>
<div class="t" style="left:1386.9px;top:396.45px;font-size:14px;line-height:14px;color:#383838;font-weight:normal;letter-spacing:0.8166666666666667px;transform:scaleX(0.98);transform-origin:0 0;">Еще</div>
<div class="dd" style="left:1422px;top:402px"></div>
<div style="position:absolute;left:459px;top:425px;width:974px;height:455px;border:1px solid #a0a0a0;background:#fff"></div>
<div style="position:absolute;left:461px;top:427px;width:31px;height:28px;background:#f2f2f2"></div>
<div style="position:absolute;left:495px;top:427px;width:923px;height:28px;background:#f2f2f2"></div>
<div style="position:absolute;left:460px;top:456px;width:960px;height:1px;background:#c9c9c9"></div>
<div style="position:absolute;left:493px;top:426px;width:1px;height:30px;background:#cdcdcd"></div>
<div class="t" style="left:501.8px;top:433.05px;font-size:14px;line-height:14px;color:#4d4d4d;font-weight:normal;letter-spacing:0.23888888888880805px;transform:scaleX(0.9);transform-origin:0 0;">Поле</div>
<svg style="position:absolute;left:1423px;top:434px;" width="8" height="6" viewBox="0 0 8 6"><path d="M0.5 5L4 0.8L7.5 5z" fill="#444"/></svg>
<div style="position:absolute;left:1423px;top:449px;width:8px;height:409px;background:#d4d4d4;border-radius:4px"></div>
<div style="position:absolute;left:1423px;top:539px;width:8px;height:319px;background:#9a9a9a;border-radius:4px"></div>
<svg style="position:absolute;left:1423px;top:867px;" width="8" height="6" viewBox="0 0 8 6"><path d="M0.5 1L4 5.2L7.5 1z" fill="#c4c4c4"/></svg>
<div style="position:absolute;left:460px;top:485px;width:960px;height:1px;background:#e4e4e4"></div>
<svg style="position:absolute;left:469px;top:460px;" width="17" height="18" viewBox="0 0 17 18"><rect x="0.6" y="3.6" width="13.8" height="13.8" rx="1.8" fill="#fff" stroke="#9a9a9a" stroke-width="1.2"/><path d="M3.8 9.2L7.4 12.9L15.2 3.2" fill="none" stroke="#0e9a40" stroke-width="2.5" stroke-linecap="round" stroke-linejoin="round"/></svg>
<svg style="position:absolute;left:543px;top:470px;" width="10" height="4" viewBox="0 0 10 4"><rect x="0.5" y="0.5" width="9" height="3" rx="1.3" fill="#79a0c4" stroke="#5780a5" stroke-width="1"/><path d="M1.5 1.5H8.5" stroke="#bcd1e5" stroke-width="1"/></svg>
<div class="t" style="left:565.5px;top:463.95px;font-size:14px;line-height:14px;color:#363636;font-weight:normal;letter-spacing:0.2500000000000101px;transform:scaleX(0.9);transform-origin:0 0;">Дата рождения</div>
<div style="position:absolute;left:460px;top:514px;width:960px;height:1px;background:#e4e4e4"></div>
<svg style="position:absolute;left:469px;top:489px;" width="17" height="18" viewBox="0 0 17 18"><rect x="0.6" y="3.6" width="13.8" height="13.8" rx="1.8" fill="#fff" stroke="#9a9a9a" stroke-width="1.2"/><path d="M3.8 9.2L7.4 12.9L15.2 3.2" fill="none" stroke="#0e9a40" stroke-width="2.5" stroke-linecap="round" stroke-linejoin="round"/></svg>
<svg style="position:absolute;left:543px;top:499px;" width="10" height="4" viewBox="0 0 10 4"><rect x="0.5" y="0.5" width="9" height="3" rx="1.3" fill="#79a0c4" stroke="#5780a5" stroke-width="1"/><path d="M1.5 1.5H8.5" stroke="#bcd1e5" stroke-width="1"/></svg>
<div class="t" style="left:565.5px;top:492.95px;font-size:14px;line-height:14px;color:#363636;font-weight:normal;letter-spacing:0.2411111111111091px;transform:scaleX(0.9);transform-origin:0 0;">Адрес места проживания (Адрес места проживания представление)</div>
<div style="position:absolute;left:460px;top:543px;width:960px;height:1px;background:#e4e4e4"></div>
<svg style="position:absolute;left:469px;top:518px;" width="17" height="18" viewBox="0 0 17 18"><rect x="0.6" y="3.6" width="13.8" height="13.8" rx="1.8" fill="#fff" stroke="#9a9a9a" stroke-width="1.2"/><path d="M3.8 9.2L7.4 12.9L15.2 3.2" fill="none" stroke="#0e9a40" stroke-width="2.5" stroke-linecap="round" stroke-linejoin="round"/></svg>
<svg style="position:absolute;left:543px;top:528px;" width="10" height="4" viewBox="0 0 10 4"><rect x="0.5" y="0.5" width="9" height="3" rx="1.3" fill="#79a0c4" stroke="#5780a5" stroke-width="1"/><path d="M1.5 1.5H8.5" stroke="#bcd1e5" stroke-width="1"/></svg>
<div class="t" style="left:565.5px;top:521.95px;font-size:14px;line-height:14px;color:#363636;font-weight:normal;letter-spacing:0.09509803921570052px;transform:scaleX(0.9);transform-origin:0 0;">Страна гражданства</div>
<div style="position:absolute;left:460px;top:572px;width:960px;height:1px;background:#e4e4e4"></div>
<svg style="position:absolute;left:469px;top:547px;" width="17" height="18" viewBox="0 0 17 18"><rect x="0.6" y="3.6" width="13.8" height="13.8" rx="1.8" fill="#fff" stroke="#9a9a9a" stroke-width="1.2"/><path d="M3.8 9.2L7.4 12.9L15.2 3.2" fill="none" stroke="#0e9a40" stroke-width="2.5" stroke-linecap="round" stroke-linejoin="round"/></svg>
<svg style="position:absolute;left:543px;top:557px;" width="10" height="4" viewBox="0 0 10 4"><rect x="0.5" y="0.5" width="9" height="3" rx="1.3" fill="#79a0c4" stroke="#5780a5" stroke-width="1"/><path d="M1.5 1.5H8.5" stroke="#bcd1e5" stroke-width="1"/></svg>
<div class="t" style="left:565.5px;top:550.95px;font-size:14px;line-height:14px;color:#363636;font-weight:normal;letter-spacing:0.15px;transform:scaleX(0.9);transform-origin:0 0;">Статус (Статус застрахованного лица)</div>
<div style="position:absolute;left:460px;top:601px;width:960px;height:1px;background:#e4e4e4"></div>
<svg style="position:absolute;left:469px;top:576px;" width="17" height="18" viewBox="0 0 17 18"><rect x="0.6" y="3.6" width="13.8" height="13.8" rx="1.8" fill="#fff" stroke="#9a9a9a" stroke-width="1.2"/><path d="M3.8 9.2L7.4 12.9L15.2 3.2" fill="none" stroke="#0e9a40" stroke-width="2.5" stroke-linecap="round" stroke-linejoin="round"/></svg>
<svg style="position:absolute;left:543px;top:586px;" width="10" height="4" viewBox="0 0 10 4"><rect x="0.5" y="0.5" width="9" height="3" rx="1.3" fill="#79a0c4" stroke="#5780a5" stroke-width="1"/><path d="M1.5 1.5H8.5" stroke="#bcd1e5" stroke-width="1"/></svg>
<div class="t" style="left:565.5px;top:579.95px;font-size:14px;line-height:14px;color:#363636;font-weight:normal;letter-spacing:0.2566666666666909px;transform:scaleX(0.9);transform-origin:0 0;">Юбилей</div>
<div style="position:absolute;left:460px;top:630px;width:960px;height:1px;background:#e4e4e4"></div>
<svg style="position:absolute;left:469px;top:605px;" width="17" height="18" viewBox="0 0 17 18"><rect x="0.6" y="3.6" width="13.8" height="13.8" rx="1.8" fill="#fff" stroke="#9a9a9a" stroke-width="1.2"/><path d="M3.8 9.2L7.4 12.9L15.2 3.2" fill="none" stroke="#0e9a40" stroke-width="2.5" stroke-linecap="round" stroke-linejoin="round"/></svg>
<svg style="position:absolute;left:543px;top:615px;" width="10" height="4" viewBox="0 0 10 4"><rect x="0.5" y="0.5" width="9" height="3" rx="1.3" fill="#79a0c4" stroke="#5780a5" stroke-width="1"/><path d="M1.5 1.5H8.5" stroke="#bcd1e5" stroke-width="1"/></svg>
<div class="t" style="left:565.5px;top:608.95px;font-size:14px;line-height:14px;color:#363636;font-weight:normal;letter-spacing:0.3055555555555657px;transform:scaleX(0.9);transform-origin:0 0;">День рождения</div>
<div style="position:absolute;left:460px;top:659px;width:960px;height:1px;background:#e4e4e4"></div>
<svg style="position:absolute;left:469px;top:634px;" width="17" height="18" viewBox="0 0 17 18"><rect x="0.6" y="3.6" width="13.8" height="13.8" rx="1.8" fill="#fff" stroke="#9a9a9a" stroke-width="1.2"/><path d="M3.8 9.2L7.4 12.9L15.2 3.2" fill="none" stroke="#0e9a40" stroke-width="2.5" stroke-linecap="round" stroke-linejoin="round"/></svg>
<svg style="position:absolute;left:524px;top:640px;" width="9" height="9" viewBox="0 0 9 9"><circle cx="4.5" cy="4.5" r="4" fill="#fff" stroke="#b0b0b0" stroke-width="1"/><path d="M2.5 4.5H6.5" stroke="#6e6e6e" stroke-width="1"/></svg>
<svg style="position:absolute;left:543px;top:642px;" width="9" height="8" viewBox="0 0 9 8"><path d="M0.5 7.5V0.8Q0.5 0.5 0.8 0.5H3.8L4.8 1.5H8.2Q8.5 1.5 8.5 1.8V7.5z" fill="#fde46a" stroke="#cf973c" stroke-width="1"/><path d="M1 3.5H8" stroke="#cf973c" stroke-width="1"/></svg>
<div class="t" style="left:565.5px;top:637.95px;font-size:14px;line-height:14px;color:#363636;font-weight:normal;letter-spacing:0.1436507936507994px;transform:scaleX(0.9);transform-origin:0 0;">Удостоверение личности</div>
<div style="position:absolute;left:460px;top:688px;width:960px;height:1px;background:#e4e4e4"></div>
<svg style="position:absolute;left:469px;top:663px;" width="17" height="18" viewBox="0 0 17 18"><rect x="0.6" y="3.6" width="13.8" height="13.8" rx="1.8" fill="#fff" stroke="#9a9a9a" stroke-width="1.2"/><path d="M3.8 9.2L7.4 12.9L15.2 3.2" fill="none" stroke="#0e9a40" stroke-width="2.5" stroke-linecap="round" stroke-linejoin="round"/></svg>
<svg style="position:absolute;left:562px;top:673px;" width="10" height="4" viewBox="0 0 10 4"><rect x="0.5" y="0.5" width="9" height="3" rx="1.3" fill="#79a0c4" stroke="#5780a5" stroke-width="1"/><path d="M1.5 1.5H8.5" stroke="#bcd1e5" stroke-width="1"/></svg>
<div class="t" style="left:584.5px;top:666.95px;font-size:14px;line-height:14px;color:#363636;font-weight:normal;letter-spacing:0.28939393939395036px;transform:scaleX(0.9);transform-origin:0 0;">Вид (Удостоверение.Вид)</div>
<div style="position:absolute;left:460px;top:717px;width:960px;height:1px;background:#e4e4e4"></div>
<svg style="position:absolute;left:469px;top:692px;" width="17" height="18" viewBox="0 0 17 18"><rect x="0.6" y="3.6" width="13.8" height="13.8" rx="1.8" fill="#fff" stroke="#9a9a9a" stroke-width="1.2"/><path d="M3.8 9.2L7.4 12.9L15.2 3.2" fill="none" stroke="#0e9a40" stroke-width="2.5" stroke-linecap="round" stroke-linejoin="round"/></svg>
<svg style="position:absolute;left:562px;top:702px;" width="10" height="4" viewBox="0 0 10 4"><rect x="0.5" y="0.5" width="9" height="3" rx="1.3" fill="#79a0c4" stroke="#5780a5" stroke-width="1"/><path d="M1.5 1.5H8.5" stroke="#bcd1e5" stroke-width="1"/></svg>
<div class="t" style="left:584.5px;top:695.95px;font-size:14px;line-height:14px;color:#363636;font-weight:normal;letter-spacing:0.14487179487179952px;transform:scaleX(0.9);transform-origin:0 0;">Серия (Удостоверение.Серия)</div>
<div style="position:absolute;left:460px;top:746px;width:960px;height:1px;background:#e4e4e4"></div>
<svg style="position:absolute;left:469px;top:721px;" width="17" height="18" viewBox="0 0 17 18"><rect x="0.6" y="3.6" width="13.8" height="13.8" rx="1.8" fill="#fff" stroke="#9a9a9a" stroke-width="1.2"/><path d="M3.8 9.2L7.4 12.9L15.2 3.2" fill="none" stroke="#0e9a40" stroke-width="2.5" stroke-linecap="round" stroke-linejoin="round"/></svg>
<svg style="position:absolute;left:562px;top:731px;" width="10" height="4" viewBox="0 0 10 4"><rect x="0.5" y="0.5" width="9" height="3" rx="1.3" fill="#79a0c4" stroke="#5780a5" stroke-width="1"/><path d="M1.5 1.5H8.5" stroke="#bcd1e5" stroke-width="1"/></svg>
<div class="t" style="left:584.5px;top:724.95px;font-size:14px;line-height:14px;color:#363636;font-weight:normal;letter-spacing:0.15512820512820044px;transform:scaleX(0.9);transform-origin:0 0;">Номер (Удостоверение.Номер)</div>
<div style="position:absolute;left:460px;top:775px;width:960px;height:1px;background:#e4e4e4"></div>
<svg style="position:absolute;left:469px;top:750px;" width="17" height="18" viewBox="0 0 17 18"><rect x="0.6" y="3.6" width="13.8" height="13.8" rx="1.8" fill="#fff" stroke="#9a9a9a" stroke-width="1.2"/><path d="M3.8 9.2L7.4 12.9L15.2 3.2" fill="none" stroke="#0e9a40" stroke-width="2.5" stroke-linecap="round" stroke-linejoin="round"/></svg>
<svg style="position:absolute;left:562px;top:760px;" width="10" height="4" viewBox="0 0 10 4"><rect x="0.5" y="0.5" width="9" height="3" rx="1.3" fill="#79a0c4" stroke="#5780a5" stroke-width="1"/><path d="M1.5 1.5H8.5" stroke="#bcd1e5" stroke-width="1"/></svg>
<div class="t" style="left:584.5px;top:753.95px;font-size:14px;line-height:14px;color:#363636;font-weight:normal;letter-spacing:0.21666666666666984px;transform:scaleX(0.9);transform-origin:0 0;">Дата выдачи (Удостоверение.Дата выдачи)</div>
<div style="position:absolute;left:460px;top:804px;width:960px;height:1px;background:#e4e4e4"></div>
<svg style="position:absolute;left:469px;top:779px;" width="17" height="18" viewBox="0 0 17 18"><rect x="0.6" y="3.6" width="13.8" height="13.8" rx="1.8" fill="#fff" stroke="#9a9a9a" stroke-width="1.2"/><path d="M3.8 9.2L7.4 12.9L15.2 3.2" fill="none" stroke="#0e9a40" stroke-width="2.5" stroke-linecap="round" stroke-linejoin="round"/></svg>
<svg style="position:absolute;left:562px;top:789px;" width="10" height="4" viewBox="0 0 10 4"><rect x="0.5" y="0.5" width="9" height="3" rx="1.3" fill="#79a0c4" stroke="#5780a5" stroke-width="1"/><path d="M1.5 1.5H8.5" stroke="#bcd1e5" stroke-width="1"/></svg>
<div class="t" style="left:584.5px;top:782.95px;font-size:14px;line-height:14px;color:#363636;font-weight:normal;letter-spacing:0.25285714285713595px;transform:scaleX(0.9);transform-origin:0 0;">Кем выдано (Удостоверение.Кем выдан)</div>
<div style="position:absolute;left:460px;top:833px;width:960px;height:1px;background:#e4e4e4"></div>
<svg style="position:absolute;left:469px;top:808px;" width="17" height="18" viewBox="0 0 17 18"><rect x="0.6" y="3.6" width="13.8" height="13.8" rx="1.8" fill="#fff" stroke="#9a9a9a" stroke-width="1.2"/><path d="M3.8 9.2L7.4 12.9L15.2 3.2" fill="none" stroke="#0e9a40" stroke-width="2.5" stroke-linecap="round" stroke-linejoin="round"/></svg>
<svg style="position:absolute;left:562px;top:818px;" width="10" height="4" viewBox="0 0 10 4"><rect x="0.5" y="0.5" width="9" height="3" rx="1.3" fill="#79a0c4" stroke="#5780a5" stroke-width="1"/><path d="M1.5 1.5H8.5" stroke="#bcd1e5" stroke-width="1"/></svg>
<div class="t" style="left:584.5px;top:811.95px;font-size:14px;line-height:14px;color:#363636;font-weight:normal;letter-spacing:0.2673333333333357px;transform:scaleX(0.9);transform-origin:0 0;">Код подразделения (Удостоверение.Код подразделения)</div>
<div style="position:absolute;left:460px;top:835px;width:960px;height:26px;background:#fdf0c5"></div>
<div style="position:absolute;left:460px;top:835px;width:33px;height:26px;background:#fde38e"></div>
<div style="position:absolute;left:493px;top:835px;width:1px;height:26px;background:#fff"></div>
<div style="position:absolute;left:460px;top:862px;width:960px;height:1px;background:#e4e4e4"></div>
<svg style="position:absolute;left:469px;top:837px;" width="17" height="18" viewBox="0 0 17 18"><rect x="0.6" y="3.6" width="13.8" height="13.8" rx="1.8" fill="#fff" stroke="#9a9a9a" stroke-width="1.2"/><path d="M3.8 9.2L7.4 12.9L15.2 3.2" fill="none" stroke="#0e9a40" stroke-width="2.5" stroke-linecap="round" stroke-linejoin="round"/></svg>
<svg style="position:absolute;left:543px;top:847px;" width="10" height="4" viewBox="0 0 10 4"><rect x="0.5" y="0.5" width="9" height="3" rx="1.3" fill="#79a0c4" stroke="#5780a5" stroke-width="1"/><path d="M1.5 1.5H8.5" stroke="#bcd1e5" stroke-width="1"/></svg>
<div class="t" style="left:565.5px;top:840.95px;font-size:14px;line-height:14px;color:#363636;font-weight:normal;letter-spacing:0.15px;transform:scaleX(0.9);transform-origin:0 0;">Зарплатный проект</div>
<div class="t" style="left:1020.2px;top:637.95px;font-size:14px;line-height:14px;color:#363636;font-weight:normal;letter-spacing:1.1277777777776967px;transform:scaleX(0.9);transform-origin:0 0;">Авто</div>
<div style="position:absolute;left:1057px;top:901px;width:196px;height:24px;border:1px solid #c5a500;border-radius:3px;background:linear-gradient(#fff27a 0%,#fde233 40%,#f2cd00 100%);box-shadow:0 1px 1px rgba(0,0,0,0.25)"></div>
<div class="t" style="left:1070.5px;top:906.95px;font-size:14px;line-height:14px;color:#333;font-weight:bold;letter-spacing:0.45px;transform:scaleX(0.9);transform-origin:0 0;">Закрыть и сформировать</div>
<div class="btn" style="left:1264px;top:901px;width:71px;height:24px;border-color:#a9a9a9;box-shadow:0 1px 1px rgba(0,0,0,0.22)"></div>
<div class="t" style="left:1276.9px;top:907.65px;font-size:14px;line-height:14px;color:#383838;font-weight:normal;letter-spacing:0.15px;transform:scaleX(0.9);transform-origin:0 0;">Отмена</div>
<div class="btn" style="left:1346px;top:901px;width:59px;height:24px;border-color:#a9a9a9;box-shadow:0 1px 1px rgba(0,0,0,0.22)"></div>
<div class="t" style="left:1358.9px;top:907.65px;font-size:14px;line-height:14px;color:#383838;font-weight:normal;letter-spacing:0.8500000000000455px;transform:scaleX(0.98);transform-origin:0 0;">Еще</div>
<div class="dd" style="left:1394px;top:913px"></div>
<div class="btn" style="left:1417px;top:901px;width:27px;height:24px;border-color:#a9a9a9;box-shadow:0 1px 1px rgba(0,0,0,0.22)"></div>
<div class="t" style="left:1427.0px;top:906.53px;font-size:16.5px;line-height:16.5px;color:#111;font-weight:bold;letter-spacing:0px;">?</div>
<div class="t" style="left:1161.0px;top:897.42px;font-size:19px;line-height:19px;color:rgba(150,150,150,0.55);font-weight:normal;letter-spacing:0.4px;">Активация Windows</div>
<div class="t" style="left:1161.0px;top:921.65px;font-size:14px;line-height:14px;color:rgba(150,150,150,0.6);font-weight:normal;letter-spacing:0.5px;">Чтобы активировать Windows, перейдите в раздел "Параметры"</div>
<svg style="position:absolute;left:0;top:0" width="1462" height="929" viewBox="0 0 1462 929"><rect x="44.3" y="550" width="162.4" height="22.8" rx="6" fill="none" stroke="#e2362c" stroke-width="4.2"/><path d="M218 590.5L497 826" stroke="#e2362c" stroke-width="5" stroke-linecap="round"/><path d="M513 842L501.5 814L497 826L483.6 834.7z" fill="#e2362c"/></svg>
</body></html>
